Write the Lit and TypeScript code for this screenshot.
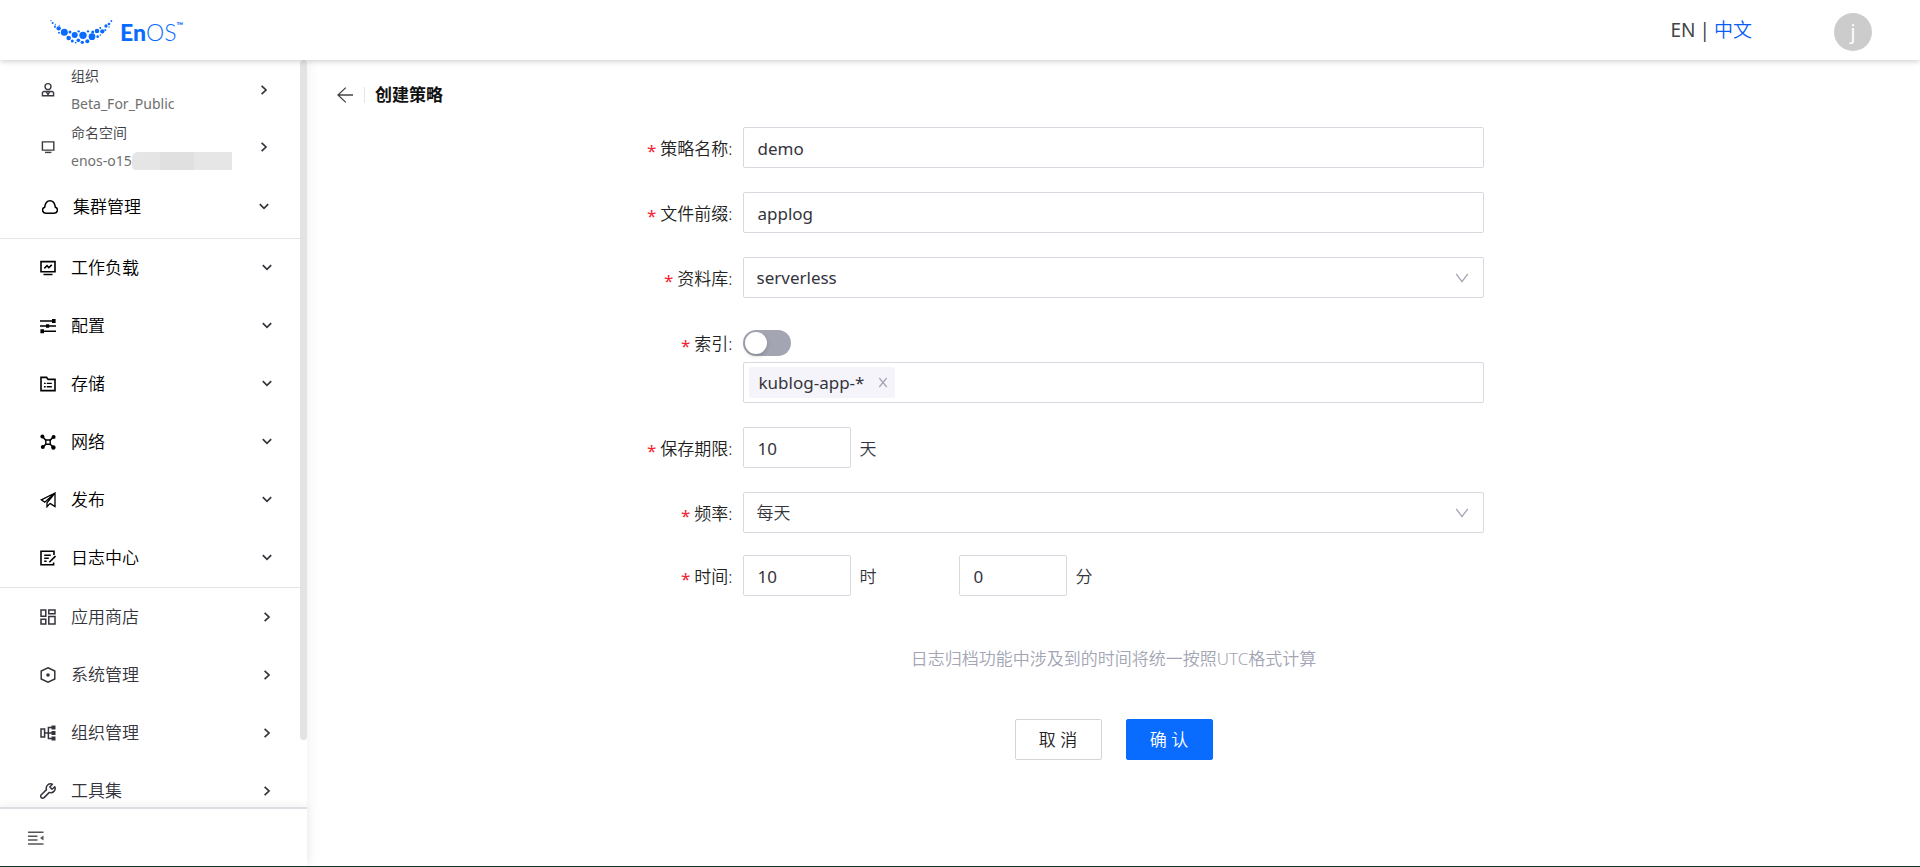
import { LitElement, html, css, svg, nothing } from "lit";
import { customElement, property, state } from "lit/decorators.js";

const FONT = css`"Noto Sans", "Noto Sans CJK SC", sans-serif`;

const icons: Record<string, unknown> = {
  org: svg`<g fill="none" stroke="currentColor" stroke-width="1.4"><circle cx="8" cy="4.600" r="3"/><path d="M2.400 13.700v-2.300q0-1.900 1.900-1.900h7.400q1.900 0 1.900 1.900v2.300z"/><path d="M6.300 9.600 8 12.600l1.700-3"/></g>`,
  monitor: svg`<g fill="none" stroke="currentColor" stroke-width="1.4"><path d="M2.400 2.900h11.400v8.200H2.400z"/><path d="M5 13.400h6.400"/></g>`,
  cloud: svg`<path fill="none" stroke="currentColor" stroke-width="1.500" d="M3.800 14.200C-.4 14-.2 8.900 2.700 8.200 3.200 4.400 5.200 1.800 8 1.800s4.800 2.600 5.300 6.400c2.900.7 3.100 5.800-1.100 6z"/>`,
  workload: svg`<g fill="none" stroke="currentColor" stroke-width="1.6"><path d="M1 1.600h14v10.200H1z"/><path d="M4.300 8.300 7 5.700l1.800 1.900 3-2.800M3.500 14.500h9"/></g>`,
  config: svg`<g stroke="currentColor" stroke-width="1.600" fill="currentColor"><path d="M0 3h14M0 8h16M2 13.200h14"/><path stroke="none" d="M12 1h3.600v4H12zM6 6.200h3.200v3.600H6zM.4 11.200H4v4H.4z"/></g>`,
  storage: svg`<g fill="none" stroke="currentColor" stroke-width="1.600"><path d="M1 1.400h5.600l1.500 2H15v11.200H1z"/><path stroke-width="1.400" d="M4 7.400h1.700M6.800 7.400h5M4 10.800h1.700M6.800 10.800h5"/></g>`,
  network: svg`<g stroke="currentColor" fill="currentColor" stroke-width="1.600"><path fill="none" d="M2.500 2.500 6 6.500M13.500 2.500 10 6.500M2.500 13.500 6 10M13.500 13.500 10 10"/><path fill="none" stroke-width="1.400" d="M5.800 6h4.400v4.200H5.800z"/><g stroke="none"><circle cx="2.400" cy="2.500" r="2"/><circle cx="13.600" cy="3" r="2"/><circle cx="2.800" cy="13" r="2"/><circle cx="13.400" cy="13.500" r="2.200"/></g></g>`,
  publish: svg`<g fill="none" stroke="currentColor" stroke-width="1.300"><path d="M15 1 1.300 7.800l3.500 2.400L15 1v13.600l-5-3.200M15 1 7 10.800v4l3-3.400"/></g>`,
  log: svg`<g fill="none" stroke="currentColor" stroke-width="1.600"><path d="M14 5V1.200H1v13.600h12.600V12.400"/><path d="M4.200 5.200h6.600M4.200 8.200h4.600M4.200 11.200h2.400"/><path d="m15.500 6-6.200 6.200"/></g>`,
  store: svg`<g fill="none" stroke="currentColor" stroke-width="1.500"><path d="M1 1h4.800v6.200H1zM8.800 1H15v3.800H8.800zM1 10.200h4.800V15H1zM8.800 7.600H15V15H8.800z"/></g>`,
  system: svg`<path fill="none" stroke="currentColor" stroke-width="1.500" d="m8 .8 6.800 3.200v8L8 15.200 1.200 12V4z"/><circle cx="8" cy="8" r="1.800" fill="currentColor"/>`,
  tree: svg`<g fill="none" stroke="currentColor" stroke-width="1.500"><path d="M1 4h3.600v8H1zM4.600 8h8M12 2.600H8.400v10.800H12"/></g><path fill="currentColor" d="M11.500.6h4v4h-4zM11.500 6h4v4h-4zM11.500 11.600h4v4h-4z"/>`,
  tool: svg`<path fill="none" stroke="currentColor" stroke-width="1.500" stroke-linejoin="round" d="M12.400 1.300A4.300 4.300 0 0 0 6.500 6.600L1.300 11.800a1.900 1.900 0 0 0 2.800 2.800L9.300 9.400a4.300 4.300 0 0 0 5.500-5.700L12 6.300 9.800 4z"/>`,
  collapse: svg`<path stroke="currentColor" stroke-width="1.500" fill="none" d="M0 2.200h15.500M0 6.200h9.500M0 10h9.500M0 14h15.500"/><path fill="currentColor" d="M15.500 5.600v5L12 8.100z"/>`,
  right: svg`<path fill="none" stroke="currentColor" stroke-width="1.700" d="m5.600 3.800 4.400 4.200-4.400 4.200"/>`,
  down: svg`<path fill="none" stroke="currentColor" stroke-width="1.700" d="M3.800 5.200 8 9.400l4.200-4.200"/>`,
  back: svg`<path fill="none" stroke="currentColor" stroke-width="1.300" d="M16 8H1.200M8.800.6.900 8l7.900 7.400"/>`,
  close: svg`<path fill="none" stroke="currentColor" stroke-width="1.200" d="m4.300 3 7.400 9M11.700 3l-7.400 9"/>`,
  chevron: svg`<path fill="none" stroke="currentColor" stroke-width="1.300" d="M2.200 3.800 8 11.600l5.800-7.800"/>`,
};

const icon = (name: string) =>
  html`<svg class="icon" viewBox="0 0 16 16" aria-hidden="true">${icons[name]}</svg>`;

// x, y and radius of every dot of the crescent mark
const DOTS: number[][] = [
  [3, 2, 2], [8, 9, 3.2], [16, 13, 2], [15, 20, 3.2], [26, 25, 6.5], [28, 16, 1.8],
  [27, 38, 3], [43, 37, 10.5], [60, 36, 4.5], [56, 54, 6.8], [74, 45, 9], [67, 63, 4.5], [86, 34, 3.5],
  [85, 61, 5.5], [99, 46, 11], [77, 68, 2.5], [97, 67, 5], [114, 34, 3.5], [112, 64, 6], [126, 50, 10],
  [128, 36, 4.5], [141, 33, 7], [143, 50, 4], [157, 34, 6.5], [151, 24, 3], [151, 45, 2.5],
  [168, 18, 5], [166, 30, 3], [177, 12, 4], [177, 21, 2], [184, 3, 2.8],
];

@customElement("app-header")
class AppHeader extends LitElement {
  static styles = css`
    :host { display: block; }
    .bar { display: flex; align-items: center; height: 60px; padding: 0 48px 0 50px; background: #fff; box-shadow: 0 1px 6px rgba(0, 0, 0, 0.22); font-family: ${FONT}; }
    .brand { display: flex; align-items: center; gap: 5px; padding-top: 4px; color: #0a6cff; text-decoration: none; }
    .mark { width: 65px; height: 25px; }
    .name { display: flex; font-family: Lato, sans-serif; font-size: 23px; line-height: 32px; font-weight: 900; }
    .thin { font-weight: 300; }
    .tm { font-size: 9px; line-height: 20px; font-weight: 700; }
    .lang { display: flex; gap: 4px; margin-left: auto; font-size: 19px; line-height: 24px; color: #444; }
    .link { color: inherit; text-decoration: none; }
    .on { color: #0a5cf5; font-weight: 350; }
    .avatar { margin: 3px 0 0 82px; width: 38px; height: 38px; border: 0; border-radius: 50%; background: #ccc; color: #fff; font: 19px/38px ${FONT}; padding: 0; }
  `;
  render() {
    return html`<header class="bar">
      <a class="brand" href="#" aria-label="EnOS">
        <svg class="mark" viewBox="0 0 195 75" fill="currentColor" aria-hidden="true">
          ${DOTS.map(([x, y, r]) => svg`<circle cx=${x} cy=${y} r=${r} />`)}
        </svg>
        <span class="name">En<span class="thin">OS</span><span class="tm">™</span></span>
      </a>
      <nav class="lang" aria-label="语言">
        <a class="link" href="#en">EN</a><span>|</span><a class="link on" href="#zh">中文</a>
      </nav>
      <button class="avatar" type="button">j</button>
    </header>`;
  }
}

interface Item { icon: string; label: string; arrow: "down" | "right"; }

const WORK: Item[] = [
  { icon: "workload", label: "工作负载", arrow: "down" },
  { icon: "config", label: "配置", arrow: "down" },
  { icon: "storage", label: "存储", arrow: "down" },
  { icon: "network", label: "网络", arrow: "down" },
  { icon: "publish", label: "发布", arrow: "down" },
  { icon: "log", label: "日志中心", arrow: "down" },
];
const ADMIN: Item[] = [
  { icon: "store", label: "应用商店", arrow: "right" },
  { icon: "system", label: "系统管理", arrow: "right" },
  { icon: "tree", label: "组织管理", arrow: "right" },
  { icon: "tool", label: "工具集", arrow: "right" },
];

@customElement("app-sidebar")
class AppSidebar extends LitElement {
  static styles = css`
    :host { display: flex; flex-direction: column; min-height: 0; font-family: ${FONT}; color: #000; background: #fff; box-shadow: 0 0 14px rgba(0, 0, 0, 0.07); }
    .body { flex: 1; min-height: 0; display: flex; overflow: hidden; }
    .menu { flex: 1; min-width: 0; padding-top: 1px; }
    .track { width: 7px; }
    .thumb { height: 91%; border-radius: 4px; background: #e3e3e3; }
    .icon { width: 16px; height: 16px; flex: none; }
    .row { display: flex; align-items: center; gap: 15px; width: 100%; height: 58px; padding: 0 25px 0 40px; border: 0; background: none; color: inherit; text-align: left; font: 350 17px/24px ${FONT}; }
    .text { flex: 1; min-width: 0; }
    .context { padding-right: 28px; height: 57px; color: #3a3a42; font-size: 14px; line-height: 28px; }
    .cluster { padding-right: 28px; height: 63px; padding-left: 42px; }
    .sub { display: flex; align-items: center; color: #707070; font-weight: 400; }
    .mask { display: flex; width: 100px; height: 18px; background: linear-gradient(90deg, #e5e5e5 28%, #e0e0e0 28% 62%, #e6e6e6 62%); border-radius: 6px 0 0 4px; }
    .group { border-top: 1px solid #e5e5e8; }
    .admin { color: #34343c; }
    .arrow { display: flex; color: #34343c; }
    .foot { display: flex; align-items: center; height: 57px; padding-left: 28px; border-top: 2px solid #dddde3; box-shadow: 0 -2px 8px rgba(0, 0, 0, 0.06); }
    .fold { display: flex; border: 0; padding: 0; background: none; color: #555; }
  `;
  private row(i: Item, extra = "") {
    return html`<button type="button" class="row ${extra}">
      ${icon(i.icon)}<span class="text">${i.label}</span><span class="arrow">${icon(i.arrow)}</span>
    </button>`;
  }
  private context(name: string, title: string, value: string, masked: boolean) {
    return html`<button type="button" class="row context">
      ${icon(name)}
      <span class="text">${title}<span class="sub">${value}${masked ? html`<span class="mask"></span>` : nothing}</span></span>
      <span class="arrow">${icon("right")}</span>
    </button>`;
  }
  render() {
    return html`
      <div class="body">
        <nav class="menu">
          ${this.context("org", "组织", "Beta_For_Public", false)}
          ${this.context("monitor", "命名空间", "enos-o15", true)}
          ${this.row({ icon: "cloud", label: "集群管理", arrow: "down" }, "cluster")}
          <div class="group">${WORK.map((i) => this.row(i))}</div>
          <div class="group admin">${ADMIN.map((i) => this.row(i))}</div>
        </nav>
        <div class="track"><div class="thumb"></div></div>
      </div>
      <div class="foot"><button class="fold" type="button" aria-label="收起">${icon("collapse")}</button></div>
    `;
  }
}

@customElement("policy-form")
class PolicyForm extends LitElement {
  @property() heading = "创建策略";
  @state() private tags = ["kublog-app-*"];

  static styles = css`
    :host { display: block; font-family: ${FONT}; font-size: 17px; color: #34343c; }
    .icon { width: 16px; height: 16px; display: block; }
    .title { display: flex; align-items: center; padding: 22px 30px 0; }
    .back { border: 0; background: none; padding: 0; color: #444; }
    .name { margin: 0 0 0 11px; padding-left: 10px; font-size: 17px; line-height: 16px; border-left: 1px solid #e5e5e5; color: #111; font-weight: 700; }
    .form { display: flex; flex-direction: column; gap: 24px; padding-top: 24px; }
    .item { display: grid; grid-template-columns: 27% 46% 27%; }
    .tight { margin-top: -2px; }
    .label { display: flex; align-items: center; justify-content: flex-end; height: 41px; padding-right: 10px; color: #222; font-weight: 350; }
    .label::before { content: "*"; margin-right: 4px; padding-top: 6px; color: #f5222d; font-weight: 400; }
    .field { display: flex; align-items: center; position: relative; }
    .stack { display: block; }
    .input, .select { box-sizing: border-box; width: 100%; height: 41px; margin: 0; border: 1px solid #d8d8e0; border-radius: 2px; background: #fff; color: #34343c; font: 17px/24px ${FONT}; padding: 2px 14px 0; outline: 0; }
    .select { appearance: none; padding: 0 13px; }
    .cjk { font-weight: 350; }
    .caret { position: absolute; right: 14px; color: #a3a5b5; pointer-events: none; }
    .part { width: 108px; flex: none; }
    .unit { flex: none; width: 108px; padding-left: 9px; box-sizing: border-box; font-weight: 350; }
    .line { display: flex; align-items: center; height: 40px; padding-top: 1px; box-sizing: border-box; }
    .switch { appearance: none; display: flex; align-items: center; margin: 0; width: 48px; height: 26px; padding: 2px; box-sizing: border-box; border-radius: 13px; background: #a3a5b3; }
    .switch::before { content: ""; width: 22px; height: 22px; border-radius: 50%; background: #fff; box-shadow: 0 2px 4px rgba(0, 35, 11, 0.2); }
    .switch:checked { justify-content: flex-end; background: #0a6cff; }
    .tags { box-sizing: border-box; display: flex; align-items: center; height: 41px; padding: 0 5px; border: 1px solid #d8d8e0; border-radius: 2px; }
    .tag { display: flex; align-items: center; gap: 11px; height: 31px; padding: 0 4px 0 10px; border-radius: 2px; background: #f4f4fa; }
    .remove { border: 0; padding: 0; background: none; color: #a3a5b5; }
    .hint { margin: 0; padding: 26px 0 24px; text-align: center; color: #a3a5b5; line-height: 25px; font-weight: 350; }
    .actions { display: flex; justify-content: center; gap: 24px; }
    .btn { height: 41px; width: 87px; padding: 0; border: 1px solid #d4d4d8; border-radius: 2px; background: #fff; color: #222; font: 350 17px/24px ${FONT}; }
    .primary { background: #0a6cff; border-color: #0a6cff; color: #fff; }
  `;

  private item(id: string, label: string, body: unknown, cls = "", row = "") {
    return html`<div class="item ${row}"><label class="label" for=${id}>${label}:</label><div class="field ${cls}">${body}</div></div>`;
  }

  render() {
    return html`
      <div class="title">
        <button class="back" type="button" aria-label="返回">${icon("back")}</button>
        <h1 class="name">${this.heading}</h1>
      </div>
      <form class="form" @submit=${(e: Event) => e.preventDefault()}>
        ${this.item("name", "策略名称", html`<input class="input" id="name" .value=${"demo"} />`)}
        ${this.item("prefix", "文件前缀", html`<input class="input" id="prefix" .value=${"applog"} />`)}
        ${this.item("repo", "资料库", html`<select class="select" id="repo"><option>serverless</option></select><span class="caret">${icon("chevron")}</span>`)}
        ${this.item("index", "索引", html`
          <div class="line"><input class="switch" id="index" type="checkbox" role="switch" /></div>
          <div class="tags">${this.tags.map((t) => html`<span class="tag">${t}<button class="remove" type="button" aria-label="移除"
            @click=${() => (this.tags = this.tags.filter((x) => x !== t))}>${icon("close")}</button></span>`)}</div>`, "stack")}
        ${this.item("keep", "保存期限", html`<input class="input part" id="keep" .value=${"10"} /><span class="unit">天</span>`)}
        ${this.item("freq", "频率", html`<select class="select cjk" id="freq"><option>每天</option></select><span class="caret">${icon("chevron")}</span>`)}
        ${this.item("hour", "时间", html`<input class="input part" id="hour" .value=${"10"} /><span class="unit">时</span>
          <input class="input part" aria-label="分" .value=${"0"} /><span class="unit">分</span>`, "", "tight")}
        <p class="hint">日志归档功能中涉及到的时间将统一按照UTC格式计算</p>
        <div class="actions"><button class="btn" type="button">取 消</button><button class="btn primary" type="submit">确 认</button></div>
      </form>
    `;
  }
}

@customElement("app-root")
class AppRoot extends LitElement {
  static styles = css`
    :host { display: block; }
    .page { display: grid; grid-template: auto 1fr / 307px 1fr; height: 100vh; box-sizing: border-box; border-bottom: 1px solid #16302b; background: #fff; overflow: hidden; }
    .top { grid-column: 1 / -1; z-index: 2; }
    .side { z-index: 1; }
    .main { min-width: 0; padding-top: 5px; }
  `;
  render() {
    return html`<div class="page">
      <app-header class="top"></app-header>
      <app-sidebar class="side"></app-sidebar>
      <main class="main"><policy-form></policy-form></main>
    </div>`;
  }
}
